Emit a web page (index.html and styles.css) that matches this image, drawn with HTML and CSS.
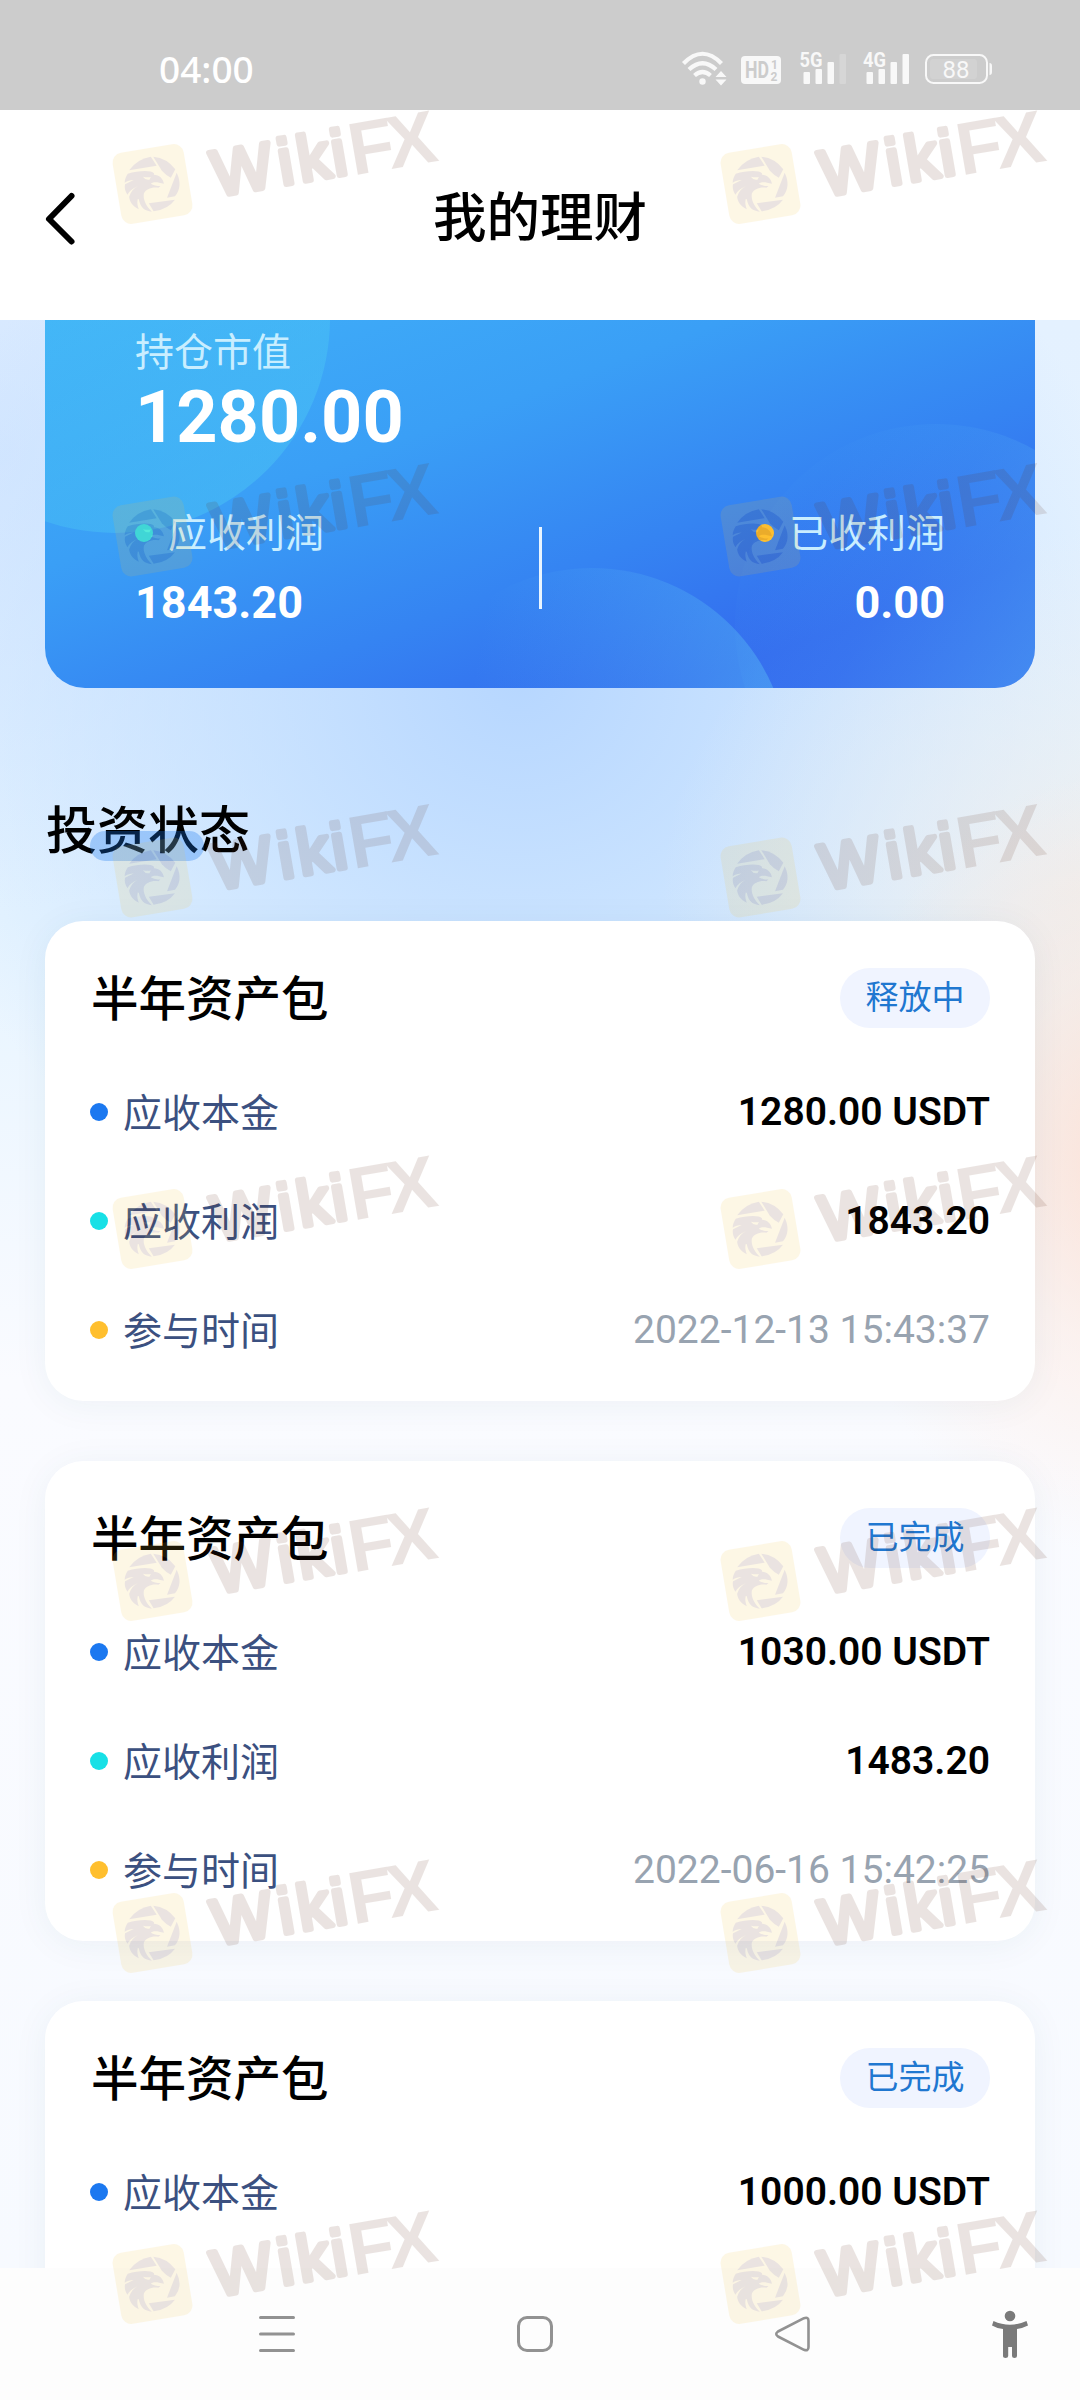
FILE: index.html
```html
<!DOCTYPE html>
<html lang="zh-CN">
<head>
<meta charset="utf-8">
<title>我的理财</title>
<link rel="stylesheet" href="styles.css">
</head>
<body>
<div class="screen">
  <div class="status">
    <span class="clock">04:00</span>
    <svg class="status-icons" width="314" height="60" viewBox="680 40 314 60">
      <g fill="none" stroke="#f8f8f8" stroke-width="4.2">
        <path d="M683.5 63.500Q702.500 44 721.500 63.500"/>
        <path d="M689 69.500Q702.500 57 716 69.500"/>
        <path d="M694.500 75.500Q702.500 68.500 710.500 75.500"/>
      </g>
      <g fill="#f8f8f8">
        <circle cx="702.500" cy="81.500" r="3.200"/>
        <path d="M721 71l5.500 6h-11zM721 85.500l5.500-6h-11z"/>
        <rect x="741" y="56" width="40" height="28" rx="4"/>
        <rect x="803.500" y="72" width="6.500" height="12" rx="1"/>
        <rect x="815.500" y="69" width="6.500" height="15" rx="1"/>
        <rect x="827.500" y="62" width="6.500" height="22" rx="1"/>
        <rect x="839.500" y="54" width="6.500" height="30" rx="1" fill="#d6d6d6"/>
        <rect x="866.500" y="72" width="6.500" height="12" rx="1"/>
        <rect x="878.500" y="69" width="6.500" height="15" rx="1"/>
        <rect x="890.500" y="62" width="6.500" height="22" rx="1"/>
        <rect x="902.500" y="54" width="6.500" height="30" rx="1"/>
        <path d="M989.500 63q2.500 0 2.500 3v6q0 3-2.500 3z"/>
      </g>
      <rect x="926" y="55" width="61" height="28" rx="7.500" fill="none" stroke="#f8f8f8" stroke-width="2"/>
      <rect x="930" y="59" width="47" height="20" rx="3" fill="#d2d2d2"/>
      <g class="status-text">
        <text x="745" y="78" font-size="23" fill="#ccc" textLength="24" lengthAdjust="spacingAndGlyphs">HD</text>
        <text x="771" y="68.500" font-size="12" fill="#ccc">1</text>
        <text x="770.500" y="81" font-size="12" fill="#ccc">2</text>
        <text x="799.500" y="66.500" font-size="21" fill="#f8f8f8" textLength="23" lengthAdjust="spacingAndGlyphs">5G</text>
        <text x="863" y="66.500" font-size="21" fill="#f8f8f8" textLength="23" lengthAdjust="spacingAndGlyphs">4G</text>
      </g>
      <text class="battery-text" x="956" y="78" text-anchor="middle">88</text>
    </svg>
  </div>

  <header class="header">
    <svg class="back" width="38" height="60" viewBox="0 0 38 60"><path d="M28.500 8 6 31l22.500 22.500" fill="none" stroke="#000" stroke-width="6" stroke-linecap="round" stroke-linejoin="round"/></svg>
    <h1>我的理财</h1>
  </header>

  <main class="main">
    <section class="hero">
      <svg class="hero-art" width="990" height="368" viewBox="45 320 990 368">
        <defs>
          <linearGradient id="ga" x1="0" y1="0" x2="1" y2="1"><stop offset="0" stop-color="#4cc8f4" stop-opacity=".1"/><stop offset="1" stop-color="#4cc8f4" stop-opacity=".5"/></linearGradient>
          <linearGradient id="gb" gradientUnits="userSpaceOnUse" x1="790" y1="530" x2="1040" y2="690"><stop offset="0" stop-color="#5ab8f5" stop-opacity=".03"/><stop offset=".4" stop-color="#5ab8f5" stop-opacity=".14"/><stop offset="1" stop-color="#5ac0f5" stop-opacity=".42"/></linearGradient>
          <linearGradient id="gc" gradientUnits="userSpaceOnUse" x1="480" y1="640" x2="760" y2="690"><stop offset="0" stop-color="#5ab8f5" stop-opacity="0"/><stop offset="1" stop-color="#5ac0f5" stop-opacity=".42"/></linearGradient>
        </defs>
        <circle cx="115" cy="318" r="215" fill="url(#ga)"/>
        <circle cx="936" cy="625" r="201" fill="url(#gb)"/>
        <circle cx="592" cy="765" r="197" fill="url(#gc)"/>
      </svg>
      <div class="hero-label">持仓市值</div>
      <div class="hero-total">1280.00</div>
      <div class="hero-stats">
        <div class="stat">
          <div class="hero-label"><i class="dot cyan"></i>应收利润</div>
          <div class="stat-value">1843.20</div>
        </div>
        <div class="divider"></div>
        <div class="stat end">
          <div class="hero-label"><i class="dot amber"></i>已收利润</div>
          <div class="stat-value">0.00</div>
        </div>
      </div>
    </section>

    <h2 class="section-title">投资状态</h2>

    <div class="cards">
      <article class="card">
        <div class="card-head"><h3>半年资产包</h3><span class="badge">释放中</span></div>
        <div class="row"><i class="dot blue"></i><span class="name">应收本金</span><b>1280.00 USDT</b></div>
        <div class="row"><i class="dot cyan"></i><span class="name">应收利润</span><b>1843.20</b></div>
        <div class="row"><i class="dot amber"></i><span class="name">参与时间</span><time>2022-12-13 15:43:37</time></div>
      </article>
      <article class="card">
        <div class="card-head"><h3>半年资产包</h3><span class="badge">已完成</span></div>
        <div class="row"><i class="dot blue"></i><span class="name">应收本金</span><b>1030.00 USDT</b></div>
        <div class="row"><i class="dot cyan"></i><span class="name">应收利润</span><b>1483.20</b></div>
        <div class="row"><i class="dot amber"></i><span class="name">参与时间</span><time>2022-06-16 15:42:25</time></div>
      </article>
      <article class="card">
        <div class="card-head"><h3>半年资产包</h3><span class="badge">已完成</span></div>
        <div class="row"><i class="dot blue"></i><span class="name">应收本金</span><b>1000.00 USDT</b></div>
      </article>
    </div>
  </main>

  <nav class="nav">
    <svg width="1080" height="132" viewBox="0 2268 1080 132" fill="none" stroke="#929292" stroke-width="3" stroke-linecap="round" stroke-linejoin="round">
      <path d="M260.500 2317.500h33M260.500 2334h33M260.500 2350.500h33"/>
      <rect x="518.500" y="2317.500" width="33" height="33" rx="8.500"/>
      <path stroke-width="2.600" d="M778 2331.500 804 2318.200Q808.500 2316.500 808.500 2321V2347Q808.500 2351.500 804 2349.800L778 2336.500Q774.500 2334 778 2331.500z"/>
      <g fill="#7a7a7a" stroke="none">
        <circle cx="1010" cy="2316" r="5.300"/>
        <path d="M993.500 2321Q1010 2328.500 1026.500 2321L1028 2325.500Q1022 2328.500 1017 2329V2356Q1017 2358 1014.500 2358T1012 2356V2347H1008.200V2356Q1008.200 2358 1005.500 2358T1003 2356V2329Q997 2328.500 992 2325.500z"/>
      </g>
    </svg>
  </nav>

  <svg class="watermarks" width="1080" height="2400" viewBox="0 0 1080 2400" aria-hidden="true">
    <defs>
      <g id="mark" opacity=".125">
        <rect x="116.500" y="148" width="72" height="72" rx="10" transform="rotate(-9.500 152.500 184)" fill="#f5c33c"/>
        <g transform="scale(.3444 .3333) translate(0 240)" fill="#612d19">
          <path d="M375 271Q397 237 438 230L455 257z"/>
          <path d="M445 230Q485 234 509 268L496 293Q480 284 470 272z"/>
          <path d="M513 278Q532 318 508 349L485 353z"/>
          <path d="M432 370 508 359Q488 388 446 394z"/>
          <path fill-rule="evenodd" d="M371 281C400 272 440 270 447 280V284C462 284 474 296 476 311L462 308C450 305 440 308 438 311C445 316 455 318 466 318L460 323C440 320 423 328 418 340C414 358 425 380 441 395C420 393 408 384 403 358L400 357C397 370 400 378 403 388C385 378 376 365 375 350C380 335 388 325 400 319C385 325 375 335 370 344C363 335 361 322 363 313L388 300C378 300 370 303 362 308C362 298 366 289 371 281zM415 290Q423 302 434 299L438 291Q428 293 415 290z"/>
        </g>
        <g class="mark-text" transform="translate(215 199) rotate(-9.700)" fill="#612d19">
          <text class="mark-round" x="1.500 68.500 88 122.500" y="-2.500" font-size="64" stroke="#612d19" stroke-width="5.500" stroke-linejoin="round" stroke-linecap="round">Wiki</text>
          <text x="140 178.500" y="0" font-size="74.500">FX</text>
        </g>
      </g>
    </defs>
    <use href="#mark"/><use href="#mark" x="608"/>
    <use href="#mark" y="352.500"/><use href="#mark" x="608" y="352.500"/>
    <use href="#mark" y="693.500"/><use href="#mark" x="608" y="693.500"/>
    <use href="#mark" y="1045"/><use href="#mark" x="608" y="1045"/>
    <use href="#mark" y="1397"/><use href="#mark" x="608" y="1397"/>
    <use href="#mark" y="1749"/><use href="#mark" x="608" y="1749"/>
    <use href="#mark" y="2100"/><use href="#mark" x="608" y="2100"/>
  </svg>
</div>
</body>
</html>
```
FILE: styles.css
```css
* { box-sizing: border-box; }
body { margin: 0; }
h1, h2, h3 { margin: 0; font-weight: 500; }

.screen {
  position: relative;
  width: 1080px;
  height: 2400px;
  overflow: hidden;
  display: flex;
  flex-direction: column;
  background: #fff;
  font-family: Roboto, "Noto Sans CJK SC", sans-serif;
}

.status {
  height: 110px;
  background: #ccc;
  display: flex;
  justify-content: space-between;
  padding: 40px 86px 0 159px;
}
.clock {
  font: 500 37px/58px "Noto Sans", sans-serif;
  color: #fff;
}
.status-text { font-family: Roboto, sans-serif; font-weight: 700; }
.battery-text { font: 400 24px Roboto, sans-serif; fill: #f8f8f8; }

.header {
  height: 210px;
  display: grid;
  grid-template-columns: 120px 1fr 120px;
  align-items: center;
  background: #fff;
}
.back { margin: 6px 0 0 43px; }
.header h1 { font-size: 53.5px; line-height: 60px; text-align: center; padding-top: 8px; }

.main {
  height: 1948px;
  overflow: hidden;
  padding: 0 45px;
  background:
    radial-gradient(ellipse 330px 400px at 1150px 840px, rgba(255,222,208,.9), rgba(255,228,215,.4) 50%, rgba(255,228,215,0)),
    radial-gradient(ellipse 420px 360px at 1080px 570px, rgba(240,238,236,.8), rgba(240,240,238,.4) 50%, rgba(240,244,246,0)),
    radial-gradient(ellipse 640px 600px at 520px 360px, rgba(180,213,255,.95), rgba(192,221,255,.7) 45%, rgba(225,240,255,0)),
    radial-gradient(ellipse 400px 460px at 0 130px, rgba(200,223,255,.6), rgba(210,230,255,0)),
    linear-gradient(#e4f1ff, #e6f4ff 600px, #fafbff 1060px, #f7faff);
}

.hero {
  position: relative;
  height: 368px;
  overflow: hidden;
  border-radius: 0 0 40px 40px;
  padding: 10px 90px 0;
  color: #fff;
  background: linear-gradient(160deg, #40b0f8 0%, #3a9ff6 34%, #3584f2 60%, #336bee 82%, #3566ee 100%);
}
.hero-art { position: absolute; left: 0; top: 0; }
.hero > div { position: relative; }
.hero-label {
  display: flex;
  align-items: center;
  font-size: 39px;
  line-height: 46px;
  color: #c9eeff;
  font-weight: 400;
}
.hero-total { font-size: 72px; line-height: 84px; font-weight: 700; }
.hero-stats { display: flex; justify-content: space-between; margin-top: 51px; }
.stat { width: 300px; }
.stat .dot { margin: -2px 15px 0 0; }
.stat-value { font-size: 45px; line-height: 54px; font-weight: 700; margin-top: 19px; }
.end { display: flex; flex-direction: column; align-items: flex-end; }
.divider { width: 3px; height: 82px; margin-top: 16px; background: #e9f5ff; }

.dot { width: 18px; height: 18px; border-radius: 50%; flex: none; }
.cyan { background: #17e0e6; }
.hero .cyan { background: #3cf0f2; }
.amber { background: #ffbf2e; }
.blue { background: #1b78f0; }

.section-title {
  position: relative;
  width: 206px;
  margin-top: 114px;
  padding-left: 1px;
  font-size: 51px;
  line-height: 60px;
}
.section-title::after {
  content: "";
  position: absolute;
  left: 45px;
  top: 29px;
  width: 114px;
  height: 30px;
  border-radius: 15px;
  background: rgba(22,119,240,.3);
}

.cards { display: grid; gap: 60px; margin-top: 59px; }
.card {
  height: 480px;
  border-radius: 38px;
  padding: 47px 45px 0;
  background: #fff;
  box-shadow: 0 4px 36px rgba(40,90,110,.06);
}
.card-head { display: flex; justify-content: space-between; height: 60px; margin-bottom: 30px; }
.card-head h3 { font-size: 47.5px; line-height: 64px; padding-left: 1px; }
.badge {
  width: 150px;
  height: 60px;
  border-radius: 30px;
  background: #f0f4ff;
  color: #1f77d0;
  font-size: 33px;
  line-height: 59px;
  text-align: center;
}
.row { display: flex; align-items: center; height: 109px; font-size: 39px; line-height: 46px; }
.row .dot { margin-top: -1px; }
.name { margin: 3px 0 0 15px; color: #3b5080; font-weight: 400; }
.row b, .row time { margin: -1px 0 0 auto; }
.row b { font-weight: 600; color: #000; }
.row time { color: #98a3b0; }

.nav { height: 132px; background: #fdfdfd; }
.nav svg { display: block; }

.watermarks { position: absolute; left: 0; top: 0; pointer-events: none; }
.mark-text { font-family: "Liberation Sans", sans-serif; font-weight: 700; }
.mark-round { font-weight: 400; }
```
